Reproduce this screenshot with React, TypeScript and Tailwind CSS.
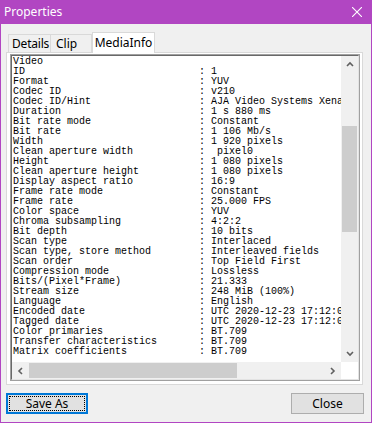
const rows: [string, string][] = [
  ["ID", "1"],
  ["Format", "YUV"],
  ["Codec ID", "v210"],
  ["Codec ID/Hint", "AJA Video Systems Xena"],
  ["Duration", "1 s 880 ms"],
  ["Bit rate mode", "Constant"],
  ["Bit rate", "1 106 Mb/s"],
  ["Width", "1 920 pixels"],
  ["Clean aperture width", " pixel0"],
  ["Height", "1 080 pixels"],
  ["Clean aperture height", "1 080 pixels"],
  ["Display aspect ratio", "16:9"],
  ["Frame rate mode", "Constant"],
  ["Frame rate", "25.000 FPS"],
  ["Color space", "YUV"],
  ["Chroma subsampling", "4:2:2"],
  ["Bit depth", "10 bits"],
  ["Scan type", "Interlaced"],
  ["Scan type, store method", "Interleaved fields"],
  ["Scan order", "Top Field First"],
  ["Compression mode", "Lossless"],
  ["Bits/(Pixel*Frame)", "21.333"],
  ["Stream size", "248 MiB (100%)"],
  ["Language", "English"],
  ["Encoded date", "UTC 2020-12-23 17:12:03"],
  ["Tagged date", "UTC 2020-12-23 17:12:03"],
  ["Color primaries", "BT.709"],
  ["Transfer characteristics", "BT.709"],
  ["Matrix coefficients", "BT.709"],
];

const Chevron = ({ dir }: { dir: "up" | "down" | "left" | "right" }) => {
  const d = {
    up: "M1 5 L4 2 L7 5",
    down: "M1 2 L4 5 L7 2",
    left: "M5 1 L2 4 L5 7",
    right: "M2 1 L5 4 L2 7",
  }[dir];
  return (
    <svg width="8" height="8" viewBox="0 0 8 8">
      <path d={d} fill="none" stroke="#606060" strokeWidth="1.6" />
    </svg>
  );
};

const App = () => {
  const ui = { fontFamily: '"Segoe UI", "Noto Sans", sans-serif' };
  return (
    <div
      className="w-[372px] h-[423px] flex flex-col bg-[#f0f0f0] border-x border-b border-[#b146c2] overflow-hidden"
      style={ui}
    >
      <div className="h-[24px] shrink-0 bg-[#b146c2] flex items-center justify-between pl-[3px] pr-[9px]">
        <span className="text-white text-[12px]">Properties</span>
        <svg width="10" height="10" viewBox="0 0 10 10">
          <path d="M0 0 L10 10 M10 0 L0 10" stroke="#ffffff" strokeWidth="1.1" />
        </svg>
      </div>

      <div className="flex flex-col px-[5px]">
        <div className="flex items-end h-[20px] mt-[8px] pl-[2px] text-[12px] text-black">
          <div className="h-[18px] w-[43px] pl-[3px] flex items-center border border-b-0 border-[#d9d9d9] bg-[#f0f0f0] tracking-[-0.2px]">
            Details
          </div>
          <div className="h-[18px] w-[41px] pl-[5px] flex items-center border border-l-0 border-b-0 border-[#d9d9d9] bg-[#f0f0f0]">
            Clip
          </div>
          <div className="h-[21px] w-[63px] -mb-px flex items-center justify-center border border-b-0 border-[#d9d9d9] bg-white relative z-10">
            MediaInfo
          </div>
        </div>

        <div className="w-[357px] h-[333px] border border-[#d9d9d9] bg-white pt-[1px] pl-[3px]">
          <div className="w-[350px] h-[327px] border border-[#a0a0a0]">
            <div className="w-full h-full border border-t-[#696969] border-l-[#696969] border-r-[#e3e3e3] border-b-[#e3e3e3] grid grid-cols-[1fr_17px] grid-rows-[1fr_17px]">
              <div
                className="overflow-hidden whitespace-pre text-[10px] leading-[10px] text-black pl-[1px] pt-[1px]"
                style={{ fontFamily: '"Liberation Mono", monospace' }}
              >
                <div>Video</div>
                {rows.map(([k, v]) => (
                  <div key={k}>{k.padEnd(31, " ") + ": " + v}</div>
                ))}
              </div>

              <div className="bg-[#f0f0f0] flex flex-col">
                <div className="h-[17px] flex items-center justify-center">
                  <Chevron dir="up" />
                </div>
                <div className="flex-1 px-[1px] pt-[53px]">
                  <div className="h-[106px] bg-[#cdcdcd]" />
                </div>
                <div className="h-[17px] flex items-center justify-center">
                  <Chevron dir="down" />
                </div>
              </div>

              <div className="bg-[#f0f0f0] flex">
                <div className="w-[17px] flex items-center justify-center">
                  <Chevron dir="left" />
                </div>
                <div className="flex-1 py-[1px]">
                  <div className="w-[208px] h-full bg-[#cdcdcd]" />
                </div>
                <div className="w-[17px] flex items-center justify-center">
                  <Chevron dir="right" />
                </div>
              </div>
              <div className="bg-white" />
            </div>
          </div>
        </div>

        <div className="flex justify-between mt-[8px] text-[12px] text-black">
          <button className="w-[82px] h-[21px] bg-[#e1e1e1] border-2 border-[#0078d7] p-px">
            <div className="w-full h-full border border-dotted border-black flex items-center justify-center">
              Save As
            </div>
          </button>
          <button className="w-[73px] h-[21px] mr-[2px] bg-[#e1e1e1] border border-[#adadad] flex items-center justify-center">
            Close
          </button>
        </div>
      </div>
    </div>
  );
};

export default App;
